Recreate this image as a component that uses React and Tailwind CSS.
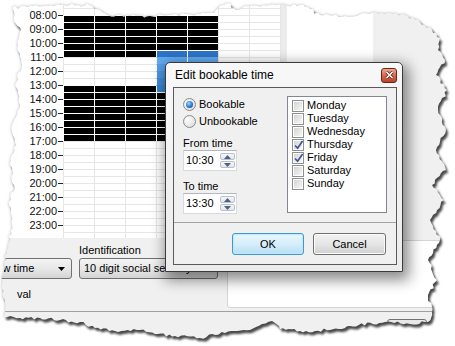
import React from 'react';

// half-hour slots starting at 07:00, 34 of them down to 24:00
const SLOTS = Array.from({ length: 34 }, (_, i) => i);
const HOURS = Array.from({ length: 17 }, (_, i) => 7 + i);
const DAYS = ['Monday', 'Tuesday', 'Wednesday', 'Thursday', 'Friday', 'Saturday', 'Sunday'];
const CHECKED = ['Thursday', 'Friday'];

const SEL = ['bg-[#2c74c6]', 'bg-[#62a9ef]', 'bg-[#569fea]', 'bg-[#4b95e2]', 'bg-[#418bda]', 'bg-[#3a84d3]'];

function cellClass(col, i) {
  const selected = (col === 3 || col === 4) && i >= 7 && i < 13;
  const booked = col < 5 && ((i >= 2 && i < 8) || (i >= 12 && i < 20));
  if (selected) return `${SEL[i - 7]} ${i === 7 ? 'border-white' : 'border-t-transparent border-l-white'}`;
  if (booked) return 'bg-black border-white';
  return 'bg-white border-[#e6e6e6]';
}

function pad(h) {
  return (h < 10 ? '0' : '') + h + ':00';
}

// torn paper outline, jittered a little so it looks ripped
const TORN = [
  [12, 8], [30, 6], [60, 5], [90, 5], [100, 10], [108, 15], [130, 16], [150, 16], [170, 15], [200, 14],
  [214, 13], [220, 6], [228, 3], [236, 10], [245, 6], [270, 5], [300, 5], [310, 9], [320, 15], [345, 16],
  [370, 14], [390, 13], [405, 15], [420, 22], [432, 30], [440, 38],
  [438, 50], [445, 60], [436, 75], [447, 90], [438, 110], [446, 130], [436, 150], [446, 170], [432, 185],
  [444, 200], [430, 220], [440, 240], [428, 260], [437, 280], [428, 295], [432, 312], [428, 322],
  [410, 324], [385, 322], [350, 326], [330, 330], [300, 331], [280, 329], [272, 321], [262, 324],
  [250, 330], [225, 333], [200, 338], [175, 336], [155, 334], [140, 330], [115, 331], [95, 328],
  [80, 322], [60, 320], [40, 318], [20, 318], [4, 317],
  [5, 300], [2, 285], [4, 265], [8, 245], [12, 225], [9, 205], [14, 185], [10, 165], [16, 145],
  [12, 125], [20, 105], [15, 85], [22, 65], [18, 45], [21, 30], [14, 18],
];

function tornPath() {
  let s = 7;
  const rnd = () => {
    s = (s * 16807) % 2147483647;
    return (s - 1) / 2147483646;
  };
  const out = [];
  for (let i = 0; i < TORN.length; i++) {
    const [ax, ay] = TORN[i];
    const [bx, by] = TORN[(i + 1) % TORN.length];
    const dx = bx - ax;
    const dy = by - ay;
    const len = Math.hypot(dx, dy) || 1;
    const steps = Math.max(1, Math.round(len / 3));
    for (let k = 0; k < steps; k++) {
      const t = k / steps;
      let x = ax + dx * t;
      let y = ay + dy * t;
      if (k > 0) {
        const off = (rnd() - 0.5) * 3.2;
        x += (-dy / len) * off;
        y += (dx / len) * off;
      }
      out.push(`${x.toFixed(1)} ${y.toFixed(1)}`);
    }
  }
  return 'M' + out.join('L') + 'Z';
}

function TornEdge() {
  const poly = tornPath();
  return (
    <svg className="absolute inset-0 pointer-events-none" width="455" height="346" viewBox="0 0 455 346">
      <defs>
        <filter id="soft" x="-10%" y="-10%" width="120%" height="120%">
          <feGaussianBlur stdDeviation="1.6" />
        </filter>
        <filter id="hard" x="-10%" y="-10%" width="120%" height="120%">
          <feGaussianBlur stdDeviation="0.8" />
        </filter>
        <mask id="outside">
          <rect width="455" height="346" fill="white" />
          <path d={poly} fill="black" />
        </mask>
      </defs>
      <path d={`M0 0H455V346H0Z ${poly}`} fill="white" fillRule="evenodd" />
      <g mask="url(#outside)">
        <path d={poly} fill="#b5b5b5" filter="url(#soft)" />
        <path d={poly} transform="translate(2 3)" fill="#4a4a4a" filter="url(#hard)" />
      </g>
    </svg>
  );
}

function Radio({ checked, label }) {
  return (
    <div className="flex items-center h-[17px] gap-[3px] whitespace-nowrap">
      <span className="shrink-0 w-[13px] h-[13px] rounded-full border border-[#8a8a8a] bg-[radial-gradient(circle_at_35%_35%,#ffffff,#d6d6d6)] flex items-center justify-center">
        {checked && (
          <span className="w-[7px] h-[7px] rounded-full bg-[radial-gradient(circle_at_40%_35%,#9ad8ff,#1c72c6_60%,#0b4a8f)]" />
        )}
      </span>
      <span>{label}</span>
    </div>
  );
}

function Check({ checked, label }) {
  return (
    <div className="flex items-center h-[13px] gap-[3px] whitespace-nowrap">
      <span className="shrink-0 w-[12px] h-[12px] border border-[#8e8f8f] bg-white p-px flex">
        <span className="relative flex-1 bg-gradient-to-br from-[#d4d4d4] to-[#f7f7f7]">
          {checked && (
            <svg className="absolute left-[-1px] top-[-2px]" width="12" height="12" viewBox="0 0 12 12">
              <path d="M2 6.5 L4.6 9.2 L9.6 2" fill="none" stroke="#3f5497" strokeWidth="1.7" />
            </svg>
          )}
        </span>
      </span>
      <span>{label}</span>
    </div>
  );
}

function Spin() {
  return (
    <div className="flex flex-col gap-px mr-px">
      <span className="w-[15px] h-[7px] rounded-[2px] border border-[#b9c0cc] bg-gradient-to-b from-[#f6f7f9] to-[#e3e6eb] flex items-center justify-center">
        <svg width="7" height="4" viewBox="0 0 7 4"><path d="M0 4L3.5 0L7 4Z" fill="#4d6185" /></svg>
      </span>
      <span className="w-[15px] h-[7px] rounded-[2px] border border-[#b9c0cc] bg-gradient-to-b from-[#f6f7f9] to-[#e3e6eb] flex items-center justify-center">
        <svg width="7" height="4" viewBox="0 0 7 4"><path d="M0 0L3.5 4L7 0Z" fill="#4d6185" /></svg>
      </span>
    </div>
  );
}

function TimeInput({ value }) {
  return (
    <div className="h-[21px] flex items-center bg-white border border-[#d6dbe1] border-t-[#b4b7bd] pl-[2px]">
      <span className="flex-1">{value}</span>
      <Spin />
    </div>
  );
}

function Dialog() {
  return (
    <div className="absolute left-[165px] top-[62px] w-[238px] h-[210px] flex flex-col rounded-t-[5px] border border-[#3a3a3a] bg-gradient-to-b from-[#f8f8f8] to-[#ececec] shadow-[3px_5px_14px_3px_rgba(0,0,0,0.45)]">
      {/* title bar */}
      <div className="h-[24px] flex items-center justify-between pl-[9px] pr-[5px]">
        <span className="text-[12px] text-black">Edit bookable time</span>
        <span className="w-[16px] h-[15px] rounded-[3px] border border-[#6e2415] bg-gradient-to-b from-[#e9a896] via-[#d46a4d] to-[#b8442a] flex items-center justify-center">
          <svg width="9" height="8" viewBox="0 0 9 8">
            <path d="M1.5 1L7.5 7M7.5 1L1.5 7" stroke="#5a1a0e" strokeWidth="3" />
            <path d="M1.5 1L7.5 7M7.5 1L1.5 7" stroke="#ffffff" strokeWidth="1.6" />
          </svg>
        </span>
      </div>

      {/* client area */}
      <div className="ml-[7px] mr-[5px] h-[178px] border border-[#5a5a5a] bg-[#f0f0f0] flex flex-col">
        <div className="flex pt-[8px] px-[9px]">
          <div className="w-[54px] shrink-0 flex flex-col">
            <Radio checked label="Bookable" />
            <Radio label="Unbookable" />
            <div className="mt-[7px] h-[13px] leading-[13px] whitespace-nowrap">From time</div>
            <TimeInput value="10:30" />
            <div className="mt-[9px] h-[13px] leading-[13px] whitespace-nowrap">To time</div>
            <TimeInput value="13:30" />
          </div>
          <div className="ml-auto w-[100px] h-[117px] bg-white border border-[#828790] pl-[4px] pt-[2px] flex flex-col">
            {DAYS.map((d) => (
              <Check key={d} label={d} checked={CHECKED.includes(d)} />
            ))}
          </div>
        </div>

        <div className="mt-[8px] h-px bg-[#a3a3a3]" />

        <div className="mt-[10px] flex justify-end gap-[9px] pr-[10px]">
          <button className="w-[72px] h-[22px] rounded-[3px] border border-[#3c98d8] bg-gradient-to-b from-[#eaf6fd] via-[#d6eefb] to-[#b6def5] shadow-[inset_0_0_0_1px_#c2e8fb] text-black">
            OK
          </button>
          <button className="w-[73px] h-[22px] rounded-[3px] border border-[#707070] bg-gradient-to-b from-[#f2f2f2] via-[#e6e6e6] to-[#d0d0d0] shadow-[inset_0_0_0_1px_#fbfbfb] text-black">
            Cancel
          </button>
        </div>
      </div>
    </div>
  );
}

function Combo({ children, className }) {
  return (
    <div className={`h-[21px] flex items-center rounded-[3px] border border-[#707070] bg-gradient-to-b from-[#f3f3f3] via-[#e8e8e8] to-[#d3d3d3] whitespace-nowrap overflow-hidden ${className}`}>
      {children}
    </div>
  );
}

export default function App() {
  return (
    <div className="relative w-[455px] h-[346px] overflow-hidden bg-white text-[11px] text-black font-['Liberation_Sans',Arial,sans-serif]">
      {/* schedule */}
      <div className="flex h-[238px] overflow-hidden">
        <div className="w-[63px] flex flex-col -mt-[6px]">
          {HOURS.map((h) => (
            <div key={h} className="h-[14px] flex items-center justify-end shrink-0">
              {h > 7 && <span className="pr-px leading-none text-[#111]">{pad(h)}</span>}
              <span className="w-[5px] h-px bg-[#222]" />
            </div>
          ))}
        </div>
        <div className="flex pt-px border-r border-[#e6e6e6] self-start">
          {[0, 1, 2, 3, 4, 5, 6].map((col) => (
            <div key={col} className="flex flex-col">
              {SLOTS.map((i) => (
                <div key={i} className={`w-[31px] h-[7px] border-l border-t ${cellClass(col, i)}`} />
              ))}
            </div>
          ))}
        </div>
        <div className="w-[6px] bg-[#ececec]" />
        <div className="w-[86px] bg-white" />
        <div className="flex-1 bg-[#f0f0f0]" />
      </div>

      {/* form under the schedule */}
      <div className="h-[108px] bg-[#f0f0f0] flex flex-col">
        <div className="h-[73px] flex">
          <div className="w-[227px] flex flex-col pt-[6px]">
            <div className="h-[13px] leading-[13px] pl-[79px]">Identification</div>
            <div className="mt-px flex">
              <Combo className="ml-[-21px] w-[93px] pl-[3px] pr-[6px]">
                <span className="flex-1">Show time</span>
                <svg width="7" height="4" viewBox="0 0 7 4"><path d="M0 0H7L3.5 4Z" fill="#000" /></svg>
              </Combo>
              <Combo className="ml-[7px] w-[139px] pl-[4px] pr-[6px]">
                <span className="flex-1">10 digit social security number</span>
              </Combo>
            </div>
            <div className="mt-[9px] h-[13px] leading-[13px] pl-[17px]">val</div>
          </div>
          <div className="flex-1 mt-[2px] h-[68px] bg-white border border-[#d4d4d4] rounded-[3px]" />
        </div>
        <div className="h-px bg-[#a0a0a0]" />
        <div className="flex pl-[387px] pt-[7px]">
          <div className="w-[40px] h-[20px] rounded-[3px] border border-[#707070] bg-[#e8e8e8]" />
        </div>
      </div>

      <Dialog />
      <TornEdge />
    </div>
  );
}
